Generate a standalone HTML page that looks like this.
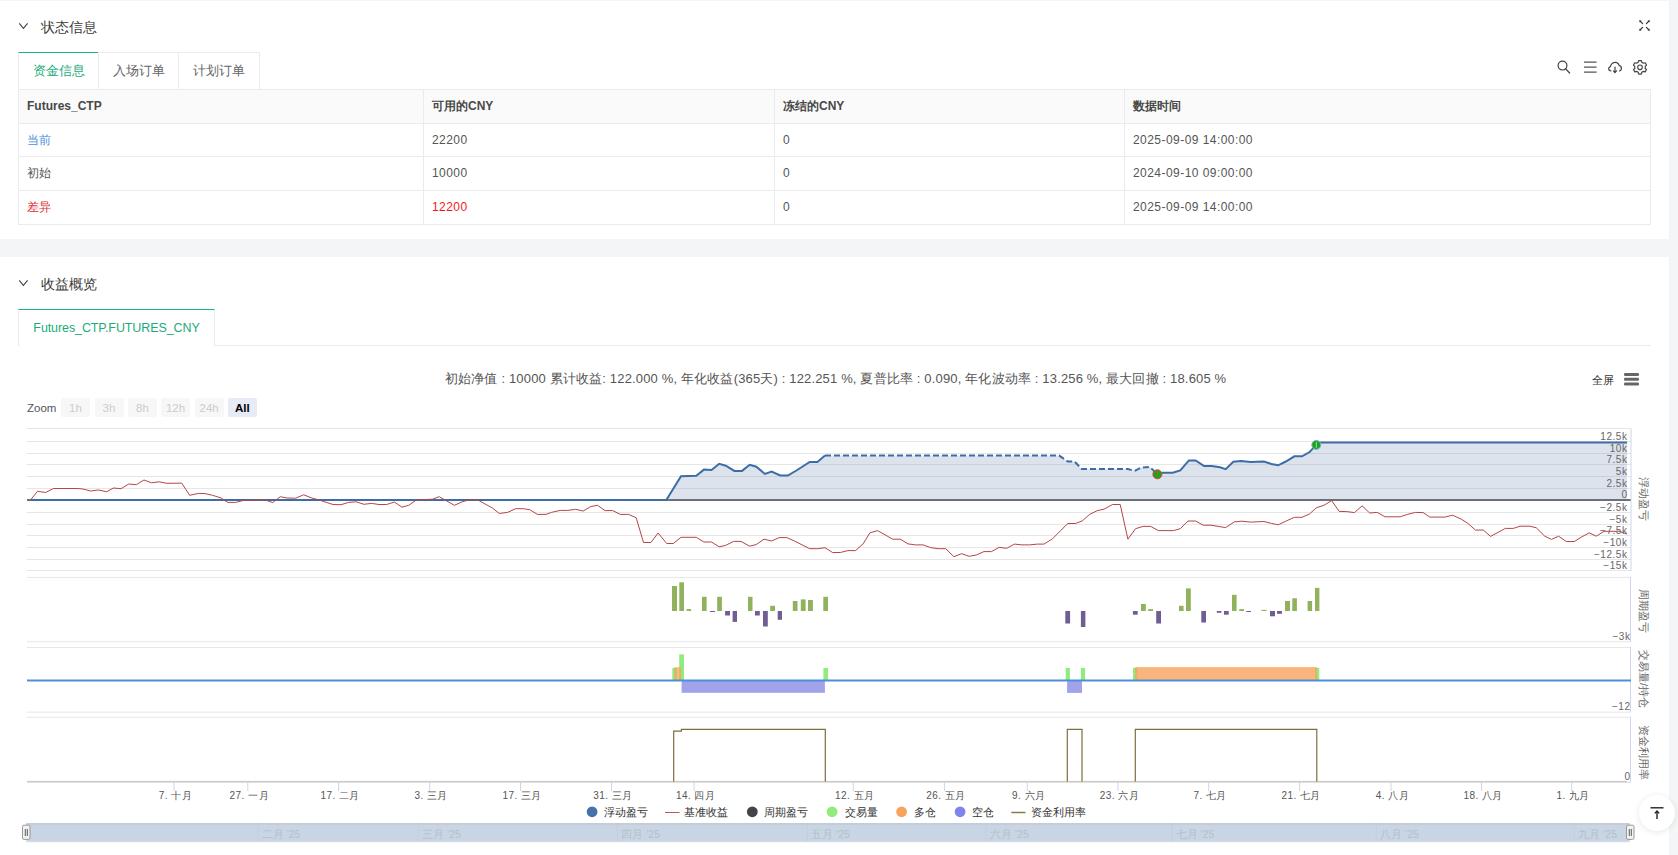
<!DOCTYPE html>
<html><head><meta charset="utf-8">
<style>
*{box-sizing:border-box;margin:0;padding:0}
html,body{width:1678px;height:855px;overflow:hidden;background:#f4f5f7;font-family:"Liberation Sans",sans-serif;color:#333}
.card{position:absolute;left:0;width:1669px;background:#fff}
#c1{top:1px;height:238px}
#c2{top:257px;height:598px}
.chev{position:absolute;width:7px;height:7px;border-right:1.2px solid #555;border-bottom:1.2px solid #555;transform:rotate(45deg)}
.title{position:absolute;font-size:14px;color:#3a3a3a;line-height:16px;white-space:nowrap;font-weight:500}
.tab{position:absolute;height:38px;border:1px solid #ebebeb;border-bottom:none;font-size:12.6px;color:#666;line-height:37px;text-align:center;background:#fff}
.tab.on{color:#1aab7a;border-top:1px solid #20b083;font-weight:500}
.tbl{position:absolute;left:18px;top:88px;width:1633px;height:136px}
.hdr{position:absolute;left:0;top:0;width:1633px;height:35px;background:#fafafa}
.hl{position:absolute;left:0;width:1633px;height:1px;background:#ebebeb}
.vl{position:absolute;top:0;width:1px;height:136px;background:#ebebeb}
.c{position:absolute;height:33px;line-height:33px;font-size:12px;color:#555;white-space:nowrap;letter-spacing:0.45px}
.c.b{font-weight:bold;color:#484848;letter-spacing:0}
.c.blue{color:#4a8fe0}.c.red{color:#e03030}.c.red2{color:#f01818}
.icon{position:absolute}
svg.chart{position:absolute;left:0;top:0}
svg.chart text{font-family:"Liberation Sans",sans-serif}
.ylab text,text.ylab{font-size:10px;fill:#666;letter-spacing:0.55px}
.xlab text{font-size:10px;fill:#555;letter-spacing:0.45px}
.atitle text{font-size:11px;fill:#666}
.legend text{font-size:11px;fill:#333;font-weight:500}
.navlab text{font-size:10.5px;fill:#999;fill-opacity:0.4}
.summary{position:absolute;top:371px;left:445px;font-size:13px;color:#555;white-space:nowrap;line-height:15px;letter-spacing:0.16px}
.zoom{position:absolute;top:398px;height:19px;width:29px;background:#f7f7f7;border-radius:2px;font-size:11.5px;color:#ccc;text-align:center;line-height:21px}
.zoomlab{position:absolute;left:27px;top:402px;font-size:11.5px;color:#555;line-height:13px}
.totop{position:absolute;left:1639px;top:795px;width:36px;height:36px;border-radius:50%;background:#fff;box-shadow:0 1px 6px rgba(0,0,0,0.10)}
</style></head>
<body>
<div class="card" id="c1">
  <svg class="icon" style="left:18px;top:20px" width="12" height="10"><path d="M1.3 2.3 L5.4 7.3 L9.6 2.3" fill="none" stroke="#444" stroke-width="1.1"/></svg>
  <div class="title" style="left:40.5px;top:18px">状态信息</div>
  <svg class="icon" style="left:1637px;top:17px" width="15" height="15" viewBox="0 0 15 15"><g stroke="#333" stroke-width="1.15" fill="none" stroke-linecap="round"><path d="M3 3 L5.6 5.6"/><path d="M12 3 L9.4 5.6"/><path d="M3 12 L5.6 9.4"/><path d="M12 12 L9.4 9.4"/></g><g fill="#333"><path d="M2.3 2.3 L4.6 2.7 L2.7 4.6 Z"/><path d="M12.7 2.3 L10.4 2.7 L12.3 4.6 Z"/><path d="M2.3 12.7 L4.6 12.3 L2.7 10.4 Z"/><path d="M12.7 12.7 L10.4 12.3 L12.3 10.4 Z"/></g></svg>
  <div class="tab on" style="top:51px;left:18px;width:81px">资金信息</div>
  <div class="tab" style="top:51px;left:98px;width:81px">入场订单</div>
  <div class="tab" style="top:51px;left:178px;width:82px">计划订单</div>
  <svg class="icon" style="left:1555px;top:57px" width="95" height="18" viewBox="0 0 95 18">
    <g stroke="#444" stroke-width="1.3" fill="none">
      <circle cx="7.5" cy="7.6" r="4.4" stroke-width="1.2"/><path d="M10.8 10.9 L14.6 15" stroke-linecap="round" stroke-width="1.3"/>
      <path d="M29 4.2 H41.6 M29 9.2 H41.6 M29 14.2 H41.6" stroke="#555" stroke-width="1.3"/>
      <path d="M55.8 12.9 C53 12.6 53 9.2 55.4 8.6 C56 5.2 59.2 3.9 61.2 4.4 C63 4.8 63.9 6.3 64.3 7.6 C66.9 7.8 67.2 12.4 64.6 12.9" stroke-linecap="round" stroke-width="1.25"/>
      <path d="M60 9 V14.6 M58.4 12.9 L60 14.6 L61.6 12.9" stroke-linecap="round" stroke-width="1.2"/>
      <path d="M83.19 4.32 L83.68 2.53 L86.32 2.53 L86.81 4.32 L88.41 5.24 L90.21 4.77 L91.52 7.05 L90.22 8.38 L90.22 10.22 L91.52 11.55 L90.21 13.83 L88.41 13.36 L86.81 14.28 L86.32 16.07 L83.68 16.07 L83.19 14.28 L81.59 13.36 L79.79 13.83 L78.48 11.55 L79.78 10.22 L79.78 8.38 L78.48 7.05 L79.79 4.77 L81.59 5.24 Z" stroke-linejoin="round" stroke-width="1.2"/>
      <circle cx="85" cy="9.3" r="2.3" stroke-width="1.1"/>
    </g>
  </svg>
  <div class="tbl">
    <div class="hdr"></div>
    <div class="hl" style="top:0"></div><div class="hl" style="top:34px"></div><div class="hl" style="top:67px"></div><div class="hl" style="top:101px"></div><div class="hl" style="top:135px"></div>
    <div class="vl" style="left:0"></div><div class="vl" style="left:405px"></div><div class="vl" style="left:756px"></div><div class="vl" style="left:1106px"></div><div class="vl" style="left:1632px"></div>
    <div class="c b" style="left:9px;top:1px;height:33px">Futures_CTP</div>
    <div class="c b" style="left:414px;top:1px;height:33px">可用的CNY</div>
    <div class="c b" style="left:765px;top:1px;height:33px">冻结的CNY</div>
    <div class="c b" style="left:1115px;top:1px;height:33px">数据时间</div>
    <div class="c blue" style="left:9px;top:35px">当前</div>
    <div class="c" style="left:414px;top:35px">22200</div>
    <div class="c" style="left:765px;top:35px">0</div>
    <div class="c" style="left:1115px;top:35px">2025-09-09 14:00:00</div>
    <div class="c" style="left:9px;top:68px">初始</div>
    <div class="c" style="left:414px;top:68px">10000</div>
    <div class="c" style="left:765px;top:68px">0</div>
    <div class="c" style="left:1115px;top:68px">2024-09-10 09:00:00</div>
    <div class="c red" style="left:9px;top:102px">差异</div>
    <div class="c red2" style="left:414px;top:102px">12200</div>
    <div class="c" style="left:765px;top:102px">0</div>
    <div class="c" style="left:1115px;top:102px">2025-09-09 14:00:00</div>
  </div>
</div>
<div class="card" id="c2">
  <svg class="icon" style="left:18px;top:21px" width="12" height="10"><path d="M1.3 2.3 L5.4 7.3 L9.6 2.3" fill="none" stroke="#444" stroke-width="1.1"/></svg>
  <div class="title" style="left:40.5px;top:19px">收益概览</div>
  <div style="position:absolute;left:18px;top:88px;width:1633px;height:1px;background:#ebebeb"></div>
  <div class="tab on" style="top:52px;left:18px;width:197px;height:37px;font-size:12.5px;line-height:37px;letter-spacing:-0.1px">Futures_CTP.FUTURES_CNY</div>
</div>
<div class="summary">初始净值 : 10000 累计收益: 122.000 %, 年化收益(365天) : 122.251 %, 夏普比率 : 0.090, 年化波动率 : 13.256 %, 最大回撤 : 18.605 %</div>
<div style="position:absolute;left:1591.5px;top:374px;font-size:11px;color:#333;line-height:13px">全屏</div>
<div style="position:absolute;left:1624.2px;top:373.4px;width:15px;height:2.5px;background:#666;border-radius:1.2px;box-shadow:0 4.8px 0 #666,0 9.5px 0 #666"></div>
<div class="zoomlab">Zoom</div>
<div class="zoom" style="left:61px">1h</div>
<div class="zoom" style="left:94.5px">3h</div>
<div class="zoom" style="left:128px">8h</div>
<div class="zoom" style="left:161px">12h</div>
<div class="zoom" style="left:194.6px">24h</div>
<div class="zoom" style="left:227.8px;background:#e6ebf5;color:#000;font-weight:bold">All</div>
<svg class="chart" width="1678" height="855" viewBox="0 0 1678 855">
<g><line x1="27" x2="1631" y1="428.5" y2="428.5" stroke="#e6e6e6" stroke-width="1"/>
<line x1="27" x2="1631" y1="441.5" y2="441.5" stroke="#e6e6e6" stroke-width="1"/>
<line x1="27" x2="1631" y1="453.5" y2="453.5" stroke="#e6e6e6" stroke-width="1"/>
<line x1="27" x2="1631" y1="464.5" y2="464.5" stroke="#e6e6e6" stroke-width="1"/>
<line x1="27" x2="1631" y1="476.5" y2="476.5" stroke="#e6e6e6" stroke-width="1"/>
<line x1="27" x2="1631" y1="488.5" y2="488.5" stroke="#e6e6e6" stroke-width="1"/>
<line x1="27" x2="1631" y1="512.5" y2="512.5" stroke="#e6e6e6" stroke-width="1"/>
<line x1="27" x2="1631" y1="524.5" y2="524.5" stroke="#e6e6e6" stroke-width="1"/>
<line x1="27" x2="1631" y1="535.5" y2="535.5" stroke="#e6e6e6" stroke-width="1"/>
<line x1="27" x2="1631" y1="547.5" y2="547.5" stroke="#e6e6e6" stroke-width="1"/>
<line x1="27" x2="1631" y1="559.5" y2="559.5" stroke="#e6e6e6" stroke-width="1"/>
<line x1="27" x2="1631" y1="570.5" y2="570.5" stroke="#e6e6e6" stroke-width="1"/></g>
<polygon points="666.3,500.0 666.3,500.0 681.0,476.2 696.3,475.7 703.9,469.6 711.5,470.1 719.2,463.8 725.8,465.7 734.4,470.9 742.0,470.9 749.7,464.8 756.3,466.7 764.9,473.9 771.6,471.5 780.2,475.5 787.8,475.5 796.4,470.5 809.7,461.9 817.4,461.9 825.0,455.6 1059.2,455.6 1067.8,461.5 1074.5,461.5 1081.7,469.0 1127.9,469.0 1134.5,470.9 1141.2,467.6 1149.8,466.9 1157.4,474.3 1162.2,472.8 1172.7,472.8 1180.3,470.5 1188.9,460.4 1195.6,460.4 1204.1,466.1 1211.8,466.1 1220.0,467.2 1225.7,469.1 1233.3,461.8 1241.0,460.9 1250.5,462.0 1263.9,461.5 1271.5,464.0 1278.2,465.3 1285.8,461.5 1294.4,456.3 1302.0,456.3 1309.6,452.0 1316.3,444.9 1320.1,442.4 1627.0,442.4 1627.0,500.0" fill="#778fb3" fill-opacity="0.25"/>
<line x1="27" x2="1631" y1="500" y2="500" stroke="#6b7079" stroke-width="2.2"/>
<line x1="1631" x2="1631" y1="428.5" y2="571" stroke="#ccd6eb"/>
<polyline points="30.5,500.0 666.3,500.0 681.0,476.2 696.3,475.7 703.9,469.6 711.5,470.1 719.2,463.8 725.8,465.7 734.4,470.9 742.0,470.9 749.7,464.8 756.3,466.7 764.9,473.9 771.6,471.5 780.2,475.5 787.8,475.5 796.4,470.5 809.7,461.9 817.4,461.9 825.0,455.6" fill="none" stroke="#3d6da6" stroke-width="2"/>
<polyline points="825.0,455.6 1059.2,455.6 1067.8,461.5 1074.5,461.5 1081.7,469.0 1127.9,469.0 1134.5,470.9 1141.2,467.6 1149.8,466.9 1157.4,474.3" fill="none" stroke="#3d6da6" stroke-width="2" stroke-dasharray="6,3"/>
<polyline points="1157.4,474.3 1162.2,472.8 1172.7,472.8 1180.3,470.5 1188.9,460.4 1195.6,460.4 1204.1,466.1 1211.8,466.1 1220.0,467.2 1225.7,469.1 1233.3,461.8 1241.0,460.9 1250.5,462.0 1263.9,461.5 1271.5,464.0 1278.2,465.3 1285.8,461.5 1294.4,456.3 1302.0,456.3 1309.6,452.0 1316.3,444.9 1320.1,442.4 1627.0,442.4" fill="none" stroke="#3d6da6" stroke-width="2"/>
<polyline points="30.5,500.0 37.5,491.3 45.7,492.5 53.4,488.5 77.2,488.5 83.0,489.0 90.6,491.0 98.2,490.0 106.8,491.7 113.4,488.0 121.0,488.7 128.7,484.0 136.3,484.7 144.0,480.0 151.6,482.8 159.2,481.8 166.8,483.3 181.7,483.1 189.7,495.3 198.3,493.4 205.0,493.6 212.6,495.3 221.2,498.0 227.9,502.4 235.5,502.4 243.1,500.5 250.7,500.3 264.0,499.5 272.7,502.6 280.3,496.7 287.0,498.0 295.6,498.2 303.6,494.8 311.8,498.0 317.5,499.5 333.0,504.5 341.0,504.7 348.6,502.4 356.2,501.8 363.9,504.3 371.5,503.4 379.0,504.5 386.7,504.5 394.4,502.0 402.0,507.2 408.7,505.3 416.3,500.0 432.5,499.2 439.2,496.7 445.9,500.5 454.4,505.3 463.0,501.5 470.6,499.6 477.3,499.6 484.0,503.4 492.6,508.1 499.3,513.5 507.8,512.3 515.5,508.7 523.1,508.7 529.8,509.7 537.4,514.4 546.0,514.4 551.7,512.3 560.3,510.4 567.9,510.4 575.5,509.3 583.2,511.0 590.8,506.6 597.5,505.3 605.1,510.6 612.7,510.6 620.3,514.4 628.6,514.4 636.2,517.8 643.5,542.5 650.9,542.5 658.1,533.0 666.7,543.5 673.4,543.5 681.0,537.3 696.3,537.3 703.9,542.0 711.5,542.0 719.2,546.8 725.8,545.3 733.5,541.4 741.0,541.4 749.7,546.2 756.3,544.5 764.0,539.2 771.6,541.0 779.2,537.6 786.9,537.6 794.5,541.0 802.1,544.9 809.7,548.7 817.4,548.7 825.0,547.7 832.6,552.5 840.3,552.5 847.9,550.6 855.5,550.6 863.1,543.9 869.8,532.9 877.4,530.6 885.0,534.8 892.7,539.2 900.3,539.2 908.0,543.9 915.6,544.9 923.2,544.9 930.8,547.7 938.1,548.7 945.7,548.7 953.9,556.7 961.6,553.7 969.2,556.3 976.3,555.0 983.9,551.6 991.5,551.6 999.1,547.4 1006.8,548.3 1014.4,544.1 1022.0,544.9 1029.6,544.9 1037.3,544.1 1044.0,544.1 1052.5,538.8 1060.2,531.0 1067.8,523.5 1075.4,523.5 1082.1,521.0 1089.7,514.4 1097.3,510.6 1104.0,509.2 1112.6,504.5 1120.2,504.5 1127.9,539.2 1135.5,528.7 1143.1,526.4 1150.7,526.4 1158.4,530.6 1173.6,530.6 1180.3,528.7 1187.9,521.0 1195.6,521.0 1203.2,525.2 1210.8,525.2 1225.7,527.6 1234.3,521.9 1241.9,521.2 1250.5,522.1 1263.9,521.5 1271.5,523.4 1278.2,524.8 1285.8,521.2 1294.4,517.3 1302.0,517.3 1309.6,513.9 1316.3,507.8 1323.9,505.3 1331.6,500.6 1339.2,511.4 1346.8,511.6 1354.4,512.6 1362.1,505.9 1369.7,513.0 1377.3,512.4 1385.0,516.8 1400.2,516.8 1407.8,514.3 1415.5,512.4 1423.1,512.6 1429.8,517.1 1445.0,517.1 1452.6,515.2 1461.2,519.1 1467.9,523.4 1475.5,530.1 1483.3,530.0 1490.5,536.4 1498.1,532.4 1505.3,528.4 1513.4,528.4 1520.0,526.2 1529.6,526.2 1536.2,527.7 1544.8,536.2 1551.5,539.4 1558.6,536.2 1566.3,541.5 1574.4,541.5 1582.0,536.7 1589.2,532.9 1596.3,536.2 1604.0,531.3 1619.2,531.3 1626.8,534.0" fill="none" stroke="#b64545" stroke-width="1"/>
<circle cx="1157.4" cy="474.3" r="4.5" fill="#1aa51a" stroke="#e04040" stroke-width="1"/>
<line x1="1157.4" x2="1157.4" y1="471" y2="475" stroke="#c05050" stroke-width="1"/>
<circle cx="1316.3" cy="444.9" r="4.5" fill="#1aa51a" stroke="#7fb0e0" stroke-width="1"/>
<line x1="1316.3" x2="1316.3" y1="442" y2="448" stroke="#d0e0d0" stroke-width="0.8"/>
<g class="ylab"><text x="1627.5" y="439.9" text-anchor="end">12.5k</text>
<text x="1627.5" y="451.9" text-anchor="end">10k</text>
<text x="1627.5" y="462.9" text-anchor="end">7.5k</text>
<text x="1627.5" y="474.9" text-anchor="end">5k</text>
<text x="1627.5" y="486.9" text-anchor="end">2.5k</text>
<text x="1627.5" y="498.4" text-anchor="end">0</text>
<text x="1627.5" y="510.9" text-anchor="end">−2.5k</text>
<text x="1627.5" y="522.9" text-anchor="end">−5k</text>
<text x="1627.5" y="533.9" text-anchor="end">−7.5k</text>
<text x="1627.5" y="545.9" text-anchor="end">−10k</text>
<text x="1627.5" y="557.9" text-anchor="end">−12.5k</text>
<text x="1627.5" y="568.9" text-anchor="end">−15k</text></g>
<!-- panel 2 -->
<line x1="27" x2="1631" y1="577.4" y2="577.4" stroke="#e6e6e6"/>
<line x1="27" x2="1631" y1="641.7" y2="641.7" stroke="#e6e6e6"/>
<line x1="1630.5" x2="1630.5" y1="577" y2="642" stroke="#ccd6eb"/>
<rect x="672.0" y="586.0" width="5.0" height="25.0" fill="#90b25c"/>
<rect x="679.3" y="582.3" width="4.7" height="28.7" fill="#90b25c"/>
<rect x="686.6" y="609.1" width="4.5" height="1.9" fill="#90b25c"/>
<rect x="702.0" y="596.8" width="4.6" height="14.2" fill="#90b25c"/>
<rect x="717.2" y="596.8" width="4.7" height="14.2" fill="#90b25c"/>
<rect x="748.0" y="596.8" width="4.5" height="14.2" fill="#90b25c"/>
<rect x="770.2" y="605.8" width="4.8" height="5.2" fill="#90b25c"/>
<rect x="792.8" y="601.0" width="4.7" height="10.0" fill="#90b25c"/>
<rect x="800.8" y="599.4" width="4.8" height="11.6" fill="#90b25c"/>
<rect x="808.0" y="600.0" width="4.9" height="11.0" fill="#90b25c"/>
<rect x="823.3" y="596.8" width="4.7" height="14.2" fill="#90b25c"/>
<rect x="1141.0" y="604.0" width="4.8" height="7.0" fill="#90b25c"/>
<rect x="1148.2" y="609.1" width="4.8" height="1.9" fill="#90b25c"/>
<rect x="1179.0" y="605.8" width="4.6" height="5.2" fill="#90b25c"/>
<rect x="1186.0" y="588.4" width="4.8" height="22.6" fill="#90b25c"/>
<rect x="1232.0" y="594.8" width="4.6" height="16.2" fill="#90b25c"/>
<rect x="1239.2" y="609.1" width="4.8" height="1.9" fill="#90b25c"/>
<rect x="1261.5" y="609.9" width="5.1" height="1.1" fill="#90b25c"/>
<rect x="1285.0" y="601.0" width="5.0" height="10.0" fill="#90b25c"/>
<rect x="1292.3" y="598.3" width="4.6" height="12.7" fill="#90b25c"/>
<rect x="1307.6" y="601.0" width="4.5" height="10.0" fill="#90b25c"/>
<rect x="1315.0" y="587.9" width="4.4" height="23.1" fill="#90b25c"/>
<rect x="709.9" y="611" width="5.1" height="1.0" fill="#725c92"/>
<rect x="725.1" y="611" width="4.9" height="4.5" fill="#725c92"/>
<rect x="732.6" y="611" width="4.4" height="10.9" fill="#725c92"/>
<rect x="755.0" y="611" width="4.8" height="4.5" fill="#725c92"/>
<rect x="763.0" y="611" width="4.8" height="15.5" fill="#725c92"/>
<rect x="777.7" y="611" width="4.3" height="8.8" fill="#725c92"/>
<rect x="1065.3" y="611" width="4.8" height="12.5" fill="#725c92"/>
<rect x="1080.9" y="611" width="4.5" height="16.0" fill="#725c92"/>
<rect x="1132.9" y="611" width="4.8" height="3.7" fill="#725c92"/>
<rect x="1156.2" y="611" width="4.8" height="12.5" fill="#725c92"/>
<rect x="1201.3" y="611" width="4.7" height="11.5" fill="#725c92"/>
<rect x="1216.8" y="611" width="4.6" height="1.8" fill="#725c92"/>
<rect x="1224.0" y="611" width="4.7" height="3.7" fill="#725c92"/>
<rect x="1246.3" y="611" width="4.7" height="1.0" fill="#725c92"/>
<rect x="1270.0" y="611" width="5.0" height="5.3" fill="#725c92"/>
<rect x="1277.0" y="611" width="4.9" height="2.8" fill="#725c92"/>
<text class="ylab" x="1630.5" y="640" text-anchor="end">−3k</text>
<!-- panel 3 -->
<line x1="27" x2="1631" y1="647.4" y2="647.4" stroke="#e6e6e6"/>
<line x1="27" x2="1631" y1="712.2" y2="712.2" stroke="#e6e6e6"/>
<line x1="1630.5" x2="1630.5" y1="647" y2="712" stroke="#ccd6eb"/>
<rect x="672.3" y="668" width="4.5" height="12.4" fill="#90ed7d"/>
<rect x="679.2" y="654.3" width="4.8" height="26.1" fill="#90ed7d"/>
<rect x="674.2" y="667.2" width="7" height="13.2" fill="#f7a35c" fill-opacity="0.75"/>
<rect x="823.4" y="668" width="4.6" height="12.4" fill="#90ed7d"/>
<rect x="681.6" y="680.4" width="143.3" height="12.4" fill="#a0a3ea"/>
<rect x="1065.7" y="667.9" width="4.2" height="12.5" fill="#90ed7d"/>
<rect x="1080.9" y="667.9" width="4.2" height="12.5" fill="#90ed7d"/>
<rect x="1067.1" y="680.4" width="14.9" height="12.5" fill="#a0a3ea"/>
<rect x="1133" y="667.9" width="4.5" height="12.5" fill="#90ed7d"/>
<rect x="1315.1" y="667.9" width="4.2" height="12.5" fill="#90ed7d"/>
<rect x="1135.1" y="667.1" width="181.9" height="13.3" fill="#f7a35c" fill-opacity="0.8"/>
<line x1="27" x2="1631" y1="680.4" y2="680.4" stroke="#4d90d6" stroke-width="2"/>
<text class="ylab" x="1630.5" y="710.3" text-anchor="end">−12</text>
<!-- panel 4 -->
<line x1="27" x2="1631" y1="717.3" y2="717.3" stroke="#e6e6e6"/>
<line x1="1630.5" x2="1630.5" y1="717" y2="782" stroke="#ccd6eb"/>
<line x1="27" x2="1631" y1="782.3" y2="782.3" stroke="#ccd6eb"/>
<line x1="27" x2="1627" y1="781.4" y2="781.4" stroke="#cfc6a8" stroke-width="1"/>
<polyline points="673.7,781.4 673.7,731.2 681.4,731.2 681.4,729.3 825.3,729.3 825.3,781.4" fill="none" stroke="#7d6e3e" stroke-width="1.2"/>
<polyline points="1067.3,781.4 1067.3,729.3 1082,729.3 1082,781.4" fill="none" stroke="#7d6e3e" stroke-width="1.2"/>
<polyline points="1135.3,781.4 1135.3,729.3 1316.8,729.3 1316.8,781.4" fill="none" stroke="#7d6e3e" stroke-width="1.2"/>
<text class="ylab" x="1630.5" y="780" text-anchor="end">0</text>
<g class="xlab"><line x1="174" x2="174" y1="782" y2="791" stroke="#ccd6eb"/>
<text x="175.5" y="798.8" text-anchor="middle">7. 十月</text>
<line x1="247.8" x2="247.8" y1="782" y2="791" stroke="#ccd6eb"/>
<text x="249.3" y="798.8" text-anchor="middle">27. 一月</text>
<line x1="338.6" x2="338.6" y1="782" y2="791" stroke="#ccd6eb"/>
<text x="340.1" y="798.8" text-anchor="middle">17. 二月</text>
<line x1="429.7" x2="429.7" y1="782" y2="791" stroke="#ccd6eb"/>
<text x="431.2" y="798.8" text-anchor="middle">3. 三月</text>
<line x1="520.6" x2="520.6" y1="782" y2="791" stroke="#ccd6eb"/>
<text x="522.1" y="798.8" text-anchor="middle">17. 三月</text>
<line x1="611.5" x2="611.5" y1="782" y2="791" stroke="#ccd6eb"/>
<text x="613.0" y="798.8" text-anchor="middle">31. 三月</text>
<line x1="694.1" x2="694.1" y1="782" y2="791" stroke="#ccd6eb"/>
<text x="695.6" y="798.8" text-anchor="middle">14. 四月</text>
<line x1="853.3" x2="853.3" y1="782" y2="791" stroke="#ccd6eb"/>
<text x="854.8" y="798.8" text-anchor="middle">12. 五月</text>
<line x1="944.4" x2="944.4" y1="782" y2="791" stroke="#ccd6eb"/>
<text x="945.9" y="798.8" text-anchor="middle">26. 五月</text>
<line x1="1027.3" x2="1027.3" y1="782" y2="791" stroke="#ccd6eb"/>
<text x="1028.8" y="798.8" text-anchor="middle">9. 六月</text>
<line x1="1117.9" x2="1117.9" y1="782" y2="791" stroke="#ccd6eb"/>
<text x="1119.4" y="798.8" text-anchor="middle">23. 六月</text>
<line x1="1208.7" x2="1208.7" y1="782" y2="791" stroke="#ccd6eb"/>
<text x="1210.2" y="798.8" text-anchor="middle">7. 七月</text>
<line x1="1299.6" x2="1299.6" y1="782" y2="791" stroke="#ccd6eb"/>
<text x="1301.1" y="798.8" text-anchor="middle">21. 七月</text>
<line x1="1391" x2="1391" y1="782" y2="791" stroke="#ccd6eb"/>
<text x="1392.5" y="798.8" text-anchor="middle">4. 八月</text>
<line x1="1481.6" x2="1481.6" y1="782" y2="791" stroke="#ccd6eb"/>
<text x="1483.1" y="798.8" text-anchor="middle">18. 八月</text>
<line x1="1571.7" x2="1571.7" y1="782" y2="791" stroke="#ccd6eb"/>
<text x="1573.2" y="798.8" text-anchor="middle">1. 九月</text></g>
<!-- axis titles -->
<g class="atitle">
<text transform="translate(1640,498.6) rotate(90)" text-anchor="middle">浮动盈亏</text>
<text transform="translate(1640,610.5) rotate(90)" text-anchor="middle">周期盈亏</text>
<text transform="translate(1640,679) rotate(90)" text-anchor="middle">交易量/持仓</text>
<text transform="translate(1640,752.5) rotate(90)" text-anchor="middle">资金利用率</text>
</g>
<!-- legend -->
<g class="legend">
<circle cx="592.1" cy="811.8" r="5.4" fill="#4572a7"/><text x="604" y="816">浮动盈亏</text>
<line x1="665" x2="679.5" y1="812.5" y2="812.5" stroke="#c25555" stroke-width="1"/><text x="684" y="816">基准收益</text>
<circle cx="752.3" cy="811.8" r="5.4" fill="#434348"/><text x="764" y="816">周期盈亏</text>
<circle cx="832.1" cy="811.8" r="5.4" fill="#90ed7d"/><text x="844.5" y="816">交易量</text>
<circle cx="901.6" cy="811.8" r="5.4" fill="#f7a35c"/><text x="914" y="816">多仓</text>
<circle cx="960.1" cy="811.8" r="5.4" fill="#8085e9"/><text x="972" y="816">空仓</text>
<line x1="1011.3" x2="1025.5" y1="812.5" y2="812.5" stroke="#8b7b45" stroke-width="1.5"/><text x="1031" y="816">资金利用率</text>
</g>
<!-- navigator -->
<rect x="26.3" y="823.3" width="1603.3" height="18.5" fill="#c8d5e4"/>
<line x1="26.3" x2="1629.6" y1="823.9" y2="823.9" stroke="#c0c5cc" stroke-width="1.3"/>
<line x1="26.3" x2="1629.6" y1="841.6" y2="841.6" stroke="#d9dadd" stroke-width="1.2"/>
<g class="navlab"><line x1="257.8" x2="257.8" y1="823" y2="842" stroke="#b8c5d6" stroke-opacity="0.35"/>
<text x="261.8" y="838">二月 '25</text>
<line x1="418.3" x2="418.3" y1="823" y2="842" stroke="#b8c5d6" stroke-opacity="0.35"/>
<text x="422.3" y="838">三月 '25</text>
<line x1="617.4" x2="617.4" y1="823" y2="842" stroke="#b8c5d6" stroke-opacity="0.35"/>
<text x="621.4" y="838">四月 '25</text>
<line x1="807.3" x2="807.3" y1="823" y2="842" stroke="#b8c5d6" stroke-opacity="0.35"/>
<text x="811.3" y="838">五月 '25</text>
<line x1="986.2" x2="986.2" y1="823" y2="842" stroke="#b8c5d6" stroke-opacity="0.35"/>
<text x="990.2" y="838">六月 '25</text>
<line x1="1171.7" x2="1171.7" y1="823" y2="842" stroke="#b8c5d6" stroke-opacity="0.35"/>
<text x="1175.7" y="838">七月 '25</text>
<line x1="1376.3" x2="1376.3" y1="823" y2="842" stroke="#b8c5d6" stroke-opacity="0.35"/>
<text x="1380.3" y="838">八月 '25</text>
<line x1="1574.4" x2="1574.4" y1="823" y2="842" stroke="#b8c5d6" stroke-opacity="0.35"/>
<text x="1578.4" y="838">九月 '25</text></g>
<g class="handle"><rect x="22.5" y="825.2" width="7.5" height="14.2" rx="1.5" fill="#f2f2f2" stroke="#999"/><line x1="25.3" x2="25.3" y1="829" y2="836" stroke="#333" stroke-width="0.8"/><line x1="27.3" x2="27.3" y1="829" y2="836" stroke="#333" stroke-width="0.8"/></g>
<g class="handle"><rect x="1626.5" y="825.2" width="7.5" height="14.2" rx="1.5" fill="#f2f2f2" stroke="#999"/><line x1="1629.3" x2="1629.3" y1="829" y2="836" stroke="#333" stroke-width="0.8"/><line x1="1631.3" x2="1631.3" y1="829" y2="836" stroke="#333" stroke-width="0.8"/></g>
</svg>
<div class="totop"><svg width="36" height="36" viewBox="0 0 36 36"><g stroke="#222" stroke-width="1.4" fill="none"><path d="M11.5 12.8 H24.5"/><path d="M18 16 V24"/><path d="M15.8 18.4 L18 16 L20.2 18.4"/></g></svg></div>
</body></html>
